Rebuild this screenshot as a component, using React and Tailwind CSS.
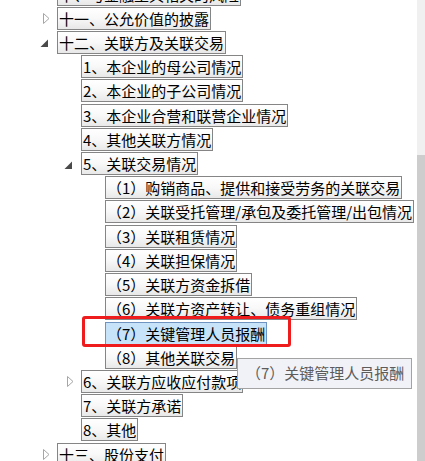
import React from 'react';

const items = [
  { level: 0, text: '十、与金融工具相关的风险', tri: 'closed' },
  { level: 0, text: '十一、公允价值的披露', tri: 'closed' },
  { level: 0, text: '十二、关联方及关联交易', tri: 'open' },
  { level: 1, text: '1、本企业的母公司情况' },
  { level: 1, text: '2、本企业的子公司情况' },
  { level: 1, text: '3、本企业合营和联营企业情况' },
  { level: 1, text: '4、其他关联方情况' },
  { level: 1, text: '5、关联交易情况', tri: 'open' },
  { level: 2, text: '（1）购销商品、提供和接受劳务的关联交易' },
  { level: 2, text: '（2）关联受托管理/承包及委托管理/出包情况' },
  { level: 2, text: '（3）关联租赁情况' },
  { level: 2, text: '（4）关联担保情况' },
  { level: 2, text: '（5）关联方资金拆借' },
  { level: 2, text: '（6）关联方资产转让、债务重组情况' },
  { level: 2, text: '（7）关键管理人员报酬', selected: true },
  { level: 2, text: '（8）其他关联交易' },
  { level: 1, text: '6、关联方应收应付款项', tri: 'closed' },
  { level: 1, text: '7、关联方承诺' },
  { level: 1, text: '8、其他' },
  { level: 0, text: '十三、股份支付', tri: 'closed' },
];

const indent = ['pl-[37px]', 'pl-[61px]', 'pl-[85px]'];

const Triangle = ({ type }) => {
  if (type === 'open') {
    return (
      <svg width="9" height="9" viewBox="0 0 9 9" className="ml-[3px] mt-[3px]">
        <polygon points="8,0.5 8,8 0.5,8" fill="#4a4a4a" />
      </svg>
    );
  }
  if (type === 'closed') {
    return (
      <svg width="7" height="11" viewBox="0 0 7 11" className="ml-[6px]">
        <polygon points="0.5,0.5 6,5.5 0.5,10.5" fill="#ffffff" stroke="#a6a6a6" strokeWidth="1" />
      </svg>
    );
  }
  return null;
};

const Row = ({ item }) => (
  <div className={`flex items-start h-[24.22px] ${indent[item.level]}`}>
    <div className="w-[20px] h-[23px] flex items-center shrink-0">
      <Triangle type={item.tri} />
    </div>
    <div
      className={`h-[23px] px-[1px] border whitespace-nowrap text-[15px] leading-[21px] text-black ${
        item.selected
          ? 'bg-[#c6e3fa] border-[#6f94c2]'
          : 'bg-linear-to-b from-white via-[#f8f8f8] to-[#e8e8e8] border-[#858585]'
      }`}
    >
      {item.text}
    </div>
  </div>
);

export default function App() {
  return (
    <div
      className="relative w-[425px] h-[461px] overflow-hidden bg-white flex"
      style={{ fontFamily: '"Microsoft YaHei", "Noto Sans CJK SC", "Noto Sans", sans-serif' }}
    >
      <div className="flex-1 overflow-hidden">
        <div className="mt-[-17.5px]">
          {items.map((item, i) => (
            <Row key={i} item={item} />
          ))}
        </div>
      </div>

      {/* scrollbar */}
      <div className="w-[8px] flex flex-col shrink-0">
        <div className="h-[155px] bg-[#f0f0f0]" />
        <div className="flex-1 bg-[#cdcdcd]" />
      </div>

      {/* red highlight */}
      <div className="absolute left-[82px] top-[316px] w-[209px] h-[31px] border-[3px] border-[#ee1c1c] rounded-[3px]" />

      {/* tooltip */}
      <div className="absolute left-[237px] top-[358px] w-[175px] h-[31px] bg-[#f1f2f7] border border-[#a3a3a3] pl-[8px] flex items-center text-[15px] text-[#5c5c5c] whitespace-nowrap">
        （7）关键管理人员报酬
      </div>
    </div>
  );
}
